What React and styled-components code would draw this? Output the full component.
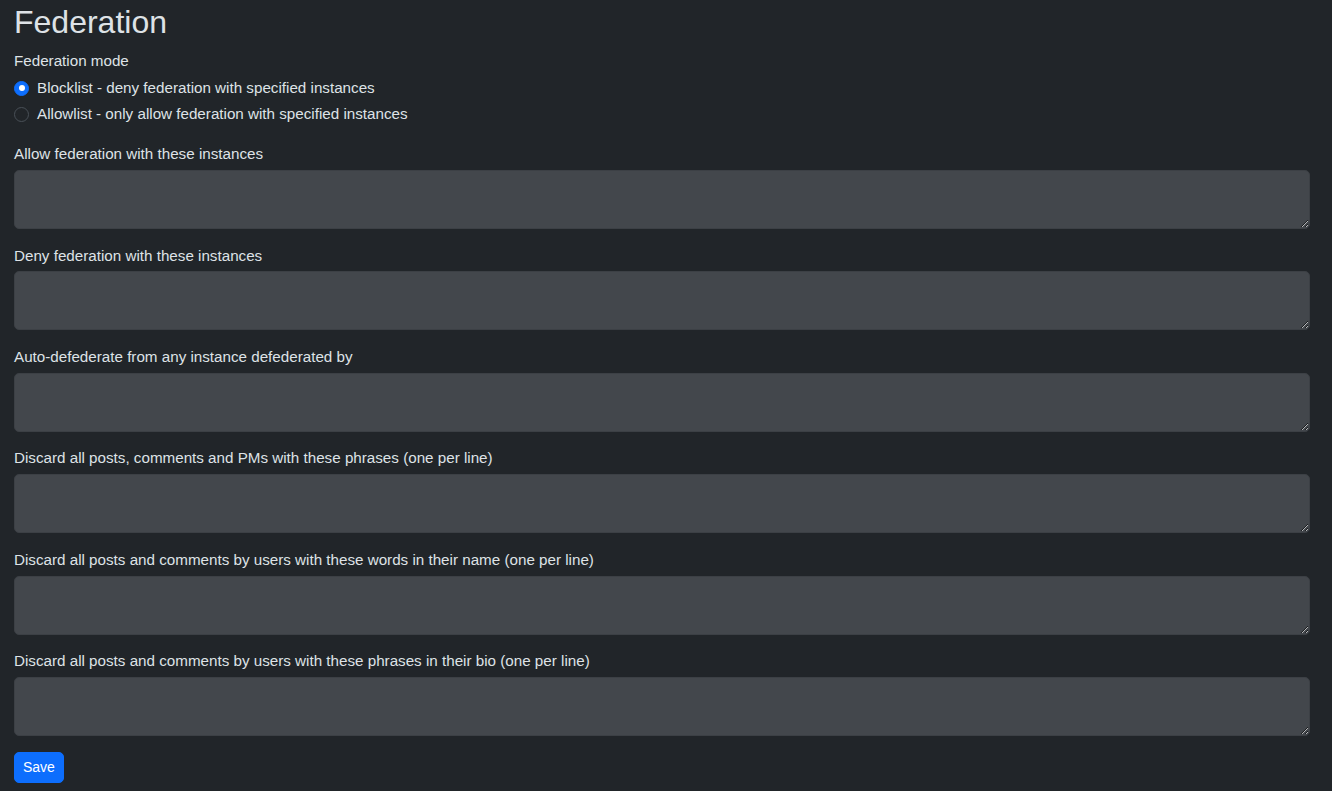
import React from "react";
import styled, { createGlobalStyle } from "styled-components";

const Global = createGlobalStyle`
  html, body { margin: 0; padding: 0; background: #212529; }
  body {
    font-family: "Liberation Sans", Arial, sans-serif;
    font-size: 15.2px;
    line-height: 1.5;
    color: #dee2e6;
  }
  * { box-sizing: border-box; }
`;

const Page = styled.form`
  padding: 0 22px 0 14px;
  display: flex;
  flex-direction: column;
`;

const Title = styled.h1`
  font-size: 32px;
  font-weight: 400;
  line-height: 1.2;
  margin: 3px 0 9px;
`;

const Label = styled.label`
  display: block;
  margin-bottom: 4px;
`;

const RadioGroup = styled.div`
  display: flex;
  flex-direction: column;
  gap: 4px;
  margin-bottom: 18px;
`;

const RadioRow = styled.label`
  display: flex;
  align-items: center;
  gap: 8px;
  height: 22px;
`;

const Radio = styled.span`
  width: 15px;
  height: 15px;
  border-radius: 50%;
  flex: none;
  background: ${(p) => (p.$checked ? "#0d6efd" : "#212529")};
  border: 1px solid ${(p) => (p.$checked ? "#0d6efd" : "#495057")};
  display: flex;
  align-items: center;
  justify-content: center;
  &::after {
    content: "";
    display: ${(p) => (p.$checked ? "block" : "none")};
    width: 6px;
    height: 6px;
    border-radius: 50%;
    background: #fff;
  }
`;

const Field = styled.div`
  display: flex;
  flex-direction: column;
  margin-bottom: 15.6px;
`;

const TextArea = styled.textarea`
  display: block;
  width: 100%;
  height: 59px;
  background: #43474c;
  border: 1px solid #3c4045;
  border-radius: 5px;
  color: #dee2e6;
  font: inherit;
  padding: 6px 12px;
  resize: vertical;
  outline: none;
`;

const SaveButton = styled.button`
  align-self: flex-start;
  background: #0d6efd;
  color: #fff;
  border: 1px solid #0d6efd;
  border-radius: 5px;
  font-family: inherit;
  font-size: 14px;
  line-height: 21px;
  height: 31px;
  padding: 4px 8px;
`;

const fields = [
  "Allow federation with these instances",
  "Deny federation with these instances",
  "Auto-defederate from any instance defederated by",
  "Discard all posts, comments and PMs with these phrases (one per line)",
  "Discard all posts and comments by users with these words in their name (one per line)",
  "Discard all posts and comments by users with these phrases in their bio (one per line)",
];

export default function App() {
  return (
    <>
      <Global />
      <Page onSubmit={(e) => e.preventDefault()}>
        <Title>Federation</Title>
        <Label>Federation mode</Label>
        <RadioGroup>
          <RadioRow>
            <Radio $checked />
            Blocklist - deny federation with specified instances
          </RadioRow>
          <RadioRow>
            <Radio />
            Allowlist - only allow federation with specified instances
          </RadioRow>
        </RadioGroup>
        {fields.map((f) => (
          <Field key={f}>
            <Label>{f}</Label>
            <TextArea />
          </Field>
        ))}
        <SaveButton type="submit">Save</SaveButton>
      </Page>
    </>
  );
}
